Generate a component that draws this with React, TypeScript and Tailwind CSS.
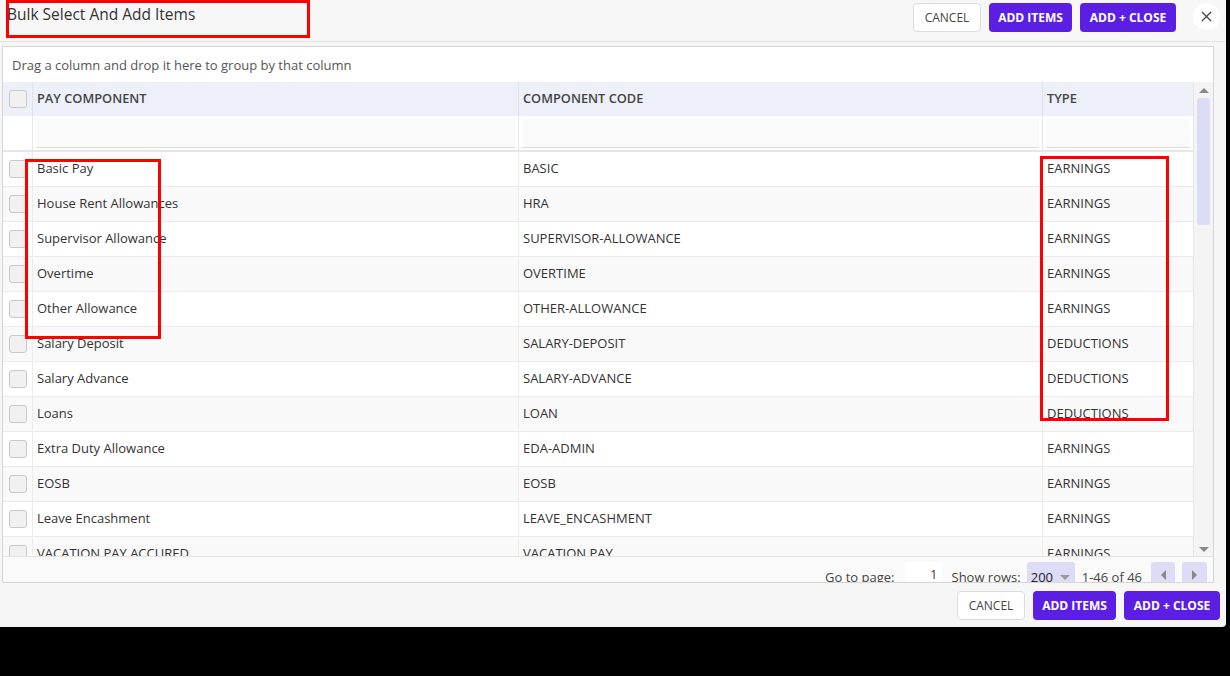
import { X } from "lucide-react";

const rows = [
  ["Basic Pay", "BASIC", "EARNINGS"],
  ["House Rent Allowances", "HRA", "EARNINGS"],
  ["Supervisor Allowance", "SUPERVISOR-ALLOWANCE", "EARNINGS"],
  ["Overtime", "OVERTIME", "EARNINGS"],
  ["Other Allowance", "OTHER-ALLOWANCE", "EARNINGS"],
  ["Salary Deposit", "SALARY-DEPOSIT", "DEDUCTIONS"],
  ["Salary Advance", "SALARY-ADVANCE", "DEDUCTIONS"],
  ["Loans", "LOAN", "DEDUCTIONS"],
  ["Extra Duty Allowance", "EDA-ADMIN", "EARNINGS"],
  ["EOSB", "EOSB", "EARNINGS"],
  ["Leave Encashment", "LEAVE_ENCASHMENT", "EARNINGS"],
  ["VACATION PAY ACCURED", "VACATION PAY", "EARNINGS"],
];

function Box() {
  return <span className="block h-[18px] w-[18px] rounded-[3px] border border-[#c8c8c8] bg-[#f1f1f1]" />;
}

function Actions() {
  return (
    <div className="flex items-center gap-2 text-[12px]">
      <button className="h-[29px] w-[68px] rounded-[4px] border border-[#dcdcdc] bg-white text-[#444]">CANCEL</button>
      <button className="h-[29px] w-[83px] rounded-[4px] bg-[#5a1fe3] font-bold text-white">ADD ITEMS</button>
      <button className="h-[29px] w-[96px] rounded-[4px] bg-[#5a1fe3] font-bold text-white">ADD + CLOSE</button>
    </div>
  );
}

export default function App() {
  return (
    <div className="h-[676px] w-[1230px] bg-black font-['Open_Sans',sans-serif] text-[13px] text-[#333]">
      <div className="relative flex h-[627px] w-[1226px] flex-col overflow-hidden rounded-br-[4px] bg-[#f6f6f6]">
        <div className="flex h-[42px] shrink-0 items-start border-b border-[#e2e2e2] bg-[#f7f7f7]">
          <h1 className="ml-[7px] mt-[3px] text-[15.5px] text-[#333]">Bulk Select And Add Items</h1>
          <div className="ml-auto mt-[3px] flex items-center">
            <Actions />
            <button className="ml-[17px] mr-[6px] -mt-[3px] flex h-[27px] w-[27px] items-center justify-center rounded-full bg-white text-[#444]">
              <X size={17} strokeWidth={1.8} />
            </button>
          </div>
        </div>

        <div className="ml-[2px] mt-[4px] flex h-[537px] w-[1212px] flex-col border border-[#d6d6d6] bg-white">
          <div className="flex h-[35px] shrink-0 items-center pl-[9px] pt-[2px] text-[#555]">
            Drag a column and drop it here to group by that column
          </div>
          <div className="flex min-h-0 flex-1">
            <div className="flex w-[1190px] flex-col">
              <div className="flex h-[34px] shrink-0 bg-[#edf0f8] text-[12.8px] font-semibold text-[#444]">
                <div className="flex w-[30px] items-center justify-center border-r border-[#dfe2ea]"><Box /></div>
                <div className="flex w-[486px] items-center border-r border-[#dfe2ea] pl-[4px]">PAY COMPONENT</div>
                <div className="flex w-[524px] items-center border-r border-[#dfe2ea] pl-[4px]">COMPONENT CODE</div>
                <div className="flex w-[150px] items-center pl-[4px]">TYPE</div>
              </div>
              <div className="flex h-[36px] shrink-0 border-b-2 border-[#e6e6e6]">
                <div className="w-[30px] border-r border-[#e6e6e6]" />
                <div className="w-[486px] border-r border-[#e6e6e6] px-[3px] pt-[3px]"><div className="h-[29px] border-b border-[#dcdcdc] bg-[#fafafa]" /></div>
                <div className="w-[524px] border-r border-[#e6e6e6] px-[3px] pt-[3px]"><div className="h-[29px] border-b border-[#dcdcdc] bg-[#fafafa]" /></div>
                <div className="w-[150px] px-[3px] pt-[3px]"><div className="h-[29px] border-b border-[#dcdcdc] bg-[#fafafa]" /></div>
              </div>
              <div className="min-h-0 flex-1 overflow-hidden">
                {rows.map(([name, code, type], i) => (
                  <div key={code} className={`flex h-[35px] border-b border-[#ececec] ${i % 2 ? "bg-[#f9f9f9]" : "bg-white"}`}>
                    <div className="flex w-[30px] items-center justify-center border-r border-[#ececec]"><Box /></div>
                    <div className="flex w-[486px] items-center border-r border-[#ececec] pl-[4px]">{name}</div>
                    <div className="flex w-[524px] items-center border-r border-[#ececec] pl-[4px]">{code}</div>
                    <div className="flex w-[150px] items-center pl-[4px]">{type}</div>
                  </div>
                ))}
              </div>
            </div>
            <div className="flex w-[20px] flex-col items-center border-l border-[#e6e6e6] bg-[#f4f4f4] pb-[4px] pt-[6px]">
              <span className="h-0 w-0 border-x-[5px] border-b-[5px] border-x-transparent border-b-[#888]" />
              <span className="mt-[5px] h-[127px] w-[13px] rounded-[3px] bg-[#dcdcf6]" />
              <span className="mt-auto h-0 w-0 border-x-[5px] border-t-[5px] border-x-transparent border-t-[#888]" />
            </div>
          </div>
          <div className="flex h-[26px] shrink-0 items-start justify-end gap-[10px] overflow-hidden border-t border-[#e4e4e4] bg-[#fafafa] pr-[6px] pt-[5px] text-[#444]">
            <span className="mt-[6px]">Go to page:</span>
            <span className="flex h-[26px] w-[37px] items-center justify-end bg-white pr-[4px]">1</span>
            <span className="mt-[6px]">Show rows:</span>
            <span className="-ml-[4px] flex h-[26px] w-[48px] items-start gap-[7px] rounded-t-[3px] bg-[#dcdcf6] pl-[4px] pt-[6px] text-[#222]">
              200
              <span className="mt-[7px] h-0 w-0 border-x-[5px] border-t-[5px] border-x-transparent border-t-[#999]" />
            </span>
            <span className="-ml-[3px] mt-[6px]">1-46 of 46</span>
            <span className="-ml-[1px] flex h-[26px] w-[24px] items-center justify-center rounded-t-[3px] bg-[#dcdcf6]">
              <span className="h-0 w-0 border-y-[5px] border-r-[5px] border-y-transparent border-r-[#888]" />
            </span>
            <span className="-ml-[3px] flex h-[26px] w-[25px] items-center justify-center rounded-t-[3px] bg-[#dcdcf6]">
              <span className="h-0 w-0 border-y-[5px] border-l-[5px] border-y-transparent border-l-[#888]" />
            </span>
          </div>
        </div>

        <div className="flex flex-1 items-center justify-end pr-[6px] pt-[1px]">
          <Actions />
        </div>

        <div className="pointer-events-none absolute left-[6px] top-0 h-[38px] w-[304px] border-[3px] border-[#ff0000]" />
        <div className="pointer-events-none absolute left-[25px] top-[159px] h-[180px] w-[136px] border-[3px] border-[#ff0000]" />
        <div className="pointer-events-none absolute left-[1040px] top-[156px] h-[265px] w-[129px] border-[3px] border-[#ff0000]" />
      </div>
    </div>
  );
}
